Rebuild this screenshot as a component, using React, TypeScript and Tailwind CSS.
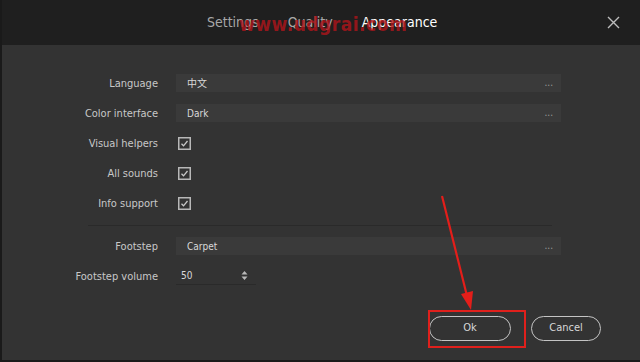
import React from 'react';

const font = { fontFamily: "'Liberation Sans Narrow', 'DejaVu Sans Condensed', 'Noto Sans CJK SC', sans-serif" };

const Label = ({ children }: { children: React.ReactNode }) => (
  <div className="text-right text-[11px] text-[#c8c8c8] leading-none">{children}</div>
);

const SelectBox = ({ value }: { value: string }) => (
  <div className="flex h-[18px] w-[385px] items-center justify-between bg-[#3a3a3a] pl-[11px] pr-[8px] text-[10px] text-[#d8d8d8]">
    <span>{value}</span>
    <span className="text-[10px] leading-none text-[#9a9a9a]">...</span>
  </div>
);

const Check = () => (
  <svg width="13" height="13" viewBox="0 0 13 13" className="ml-[2px]">
    <rect x="0.75" y="0.75" width="11.5" height="11.5" fill="none" stroke="#b8b8b8" strokeWidth="1.5" />
    <path d="M3.5 6.8 L5.5 8.8 L9.5 4" fill="none" stroke="#c8c8c8" strokeWidth="1.3" />
  </svg>
);

const Row = ({ label, children }: { label: string; children: React.ReactNode }) => (
  <div className="grid h-[30px] grid-cols-[156px_385px] items-center gap-x-[18px]">
    <Label>{label}</Label>
    <div className="flex items-center">{children}</div>
  </div>
);

export default function App() {
  return (
    <div style={font} className="relative flex h-[362px] w-[640px] flex-col overflow-hidden border-l-2 border-b-2 border-[#1a1a1a] bg-[#333333]">
      <header className="relative flex h-[45px] shrink-0 items-center bg-[#1f1f1f] pl-[205px]">
        <div className="flex items-center gap-[29px] text-[14px]">
          <span className="text-[#a8a8a8]">Settings</span>
          <span className="text-[#a8a8a8]">Quality</span>
          <span className="text-white">Appearance</span>
        </div>
        <svg width="13" height="13" viewBox="0 0 13 13" className="absolute right-[20px] top-[16px]">
          <path d="M1 1 L12 12 M12 1 L1 12" stroke="#bdbdbd" strokeWidth="1.4" />
        </svg>
        <span className="absolute left-[237px] top-[10px] text-[19px] font-bold tracking-[0.5px] text-[#b3141a]/80">
          www.udgrai.com
        </span>
      </header>

      <main className="flex flex-1 flex-col pt-[23px]">
        <Row label="Language">
          <SelectBox value="中文" />
        </Row>
        <Row label="Color interface">
          <SelectBox value="Dark" />
        </Row>
        <Row label="Visual helpers">
          <Check />
        </Row>
        <Row label="All sounds">
          <Check />
        </Row>
        <Row label="Info support">
          <Check />
        </Row>

        <div className="mt-[7px] mb-[5px] ml-[86px] h-px w-[464px] bg-[#2a2a2a]" />

        <Row label="Footstep">
          <SelectBox value="Carpet" />
        </Row>
        <Row label="Footstep volume">
          <div className="flex h-[18px] w-[80px] items-center justify-between border-b border-[#2a2a2a] pl-[5px] pr-[8px] text-[10px] text-[#d8d8d8]">
            <span>50</span>
            <svg width="7" height="11" viewBox="0 0 7 11">
              <path d="M0.5 4.5 L3.5 1 L6.5 4.5 Z M0.5 6.5 L3.5 10 L6.5 6.5 Z" fill="#b8b8b8" />
            </svg>
          </div>
        </Row>

        <div className="mt-[25px] flex justify-end gap-[20px] pr-[39px]">
          <button className="h-[25px] w-[82px] rounded-full border-[1.5px] border-[#c4c4c4] text-[11px] text-[#d8d8d8]">
            Ok
          </button>
          <button className="h-[25px] w-[70px] rounded-full border-[1.5px] border-[#c4c4c4] text-[11px] text-[#d8d8d8]">
            Cancel
          </button>
        </div>
      </main>

      <div className="absolute left-[426px] top-[310px] h-[38px] w-[98px] border-2 border-[#e0201c]" />
      <svg width="640" height="362" className="pointer-events-none absolute left-0 top-0">
        <path d="M440 196 L465 296" stroke="#e41e1a" strokeWidth="2.2" />
        <path d="M459 294 L469 310 L471 291 Z" fill="#e41e1a" />
      </svg>
    </div>
  );
}
